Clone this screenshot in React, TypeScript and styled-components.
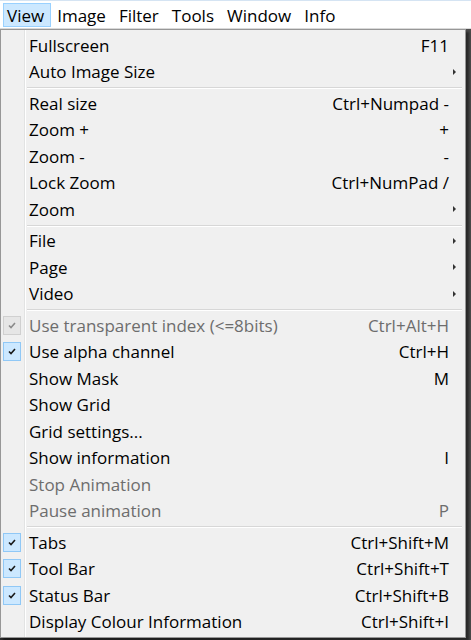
import React from 'react';
import styled, { createGlobalStyle } from 'styled-components';

type Item =
	| { kind: 'sep' }
	| {
			kind: 'item';
			label: string;
			shortcut?: string;
			submenu?: boolean;
			checked?: boolean;
			disabled?: boolean;
	  };

const items: Item[] = [
	{ kind: 'item', label: 'Fullscreen', shortcut: 'F11' },
	{ kind: 'item', label: 'Auto Image Size', submenu: true },
	{ kind: 'sep' },
	{ kind: 'item', label: 'Real size', shortcut: 'Ctrl+Numpad -' },
	{ kind: 'item', label: 'Zoom +', shortcut: '+' },
	{ kind: 'item', label: 'Zoom -', shortcut: '-' },
	{ kind: 'item', label: 'Lock Zoom', shortcut: 'Ctrl+NumPad /' },
	{ kind: 'item', label: 'Zoom', submenu: true },
	{ kind: 'sep' },
	{ kind: 'item', label: 'File', submenu: true },
	{ kind: 'item', label: 'Page', submenu: true },
	{ kind: 'item', label: 'Video', submenu: true },
	{ kind: 'sep' },
	{ kind: 'item', label: 'Use transparent index (<=8bits)', shortcut: 'Ctrl+Alt+H', checked: true, disabled: true },
	{ kind: 'item', label: 'Use alpha channel', shortcut: 'Ctrl+H', checked: true },
	{ kind: 'item', label: 'Show Mask', shortcut: 'M' },
	{ kind: 'item', label: 'Show Grid' },
	{ kind: 'item', label: 'Grid settings...' },
	{ kind: 'item', label: 'Show information', shortcut: 'I' },
	{ kind: 'item', label: 'Stop Animation', disabled: true },
	{ kind: 'item', label: 'Pause animation', shortcut: 'P', disabled: true },
	{ kind: 'sep' },
	{ kind: 'item', label: 'Tabs', shortcut: 'Ctrl+Shift+M', checked: true },
	{ kind: 'item', label: 'Tool Bar', shortcut: 'Ctrl+Shift+T', checked: true },
	{ kind: 'item', label: 'Status Bar', shortcut: 'Ctrl+Shift+B', checked: true },
	{ kind: 'item', label: 'Display Colour Information', shortcut: 'Ctrl+Shift+I' },
];

const menus = ['View', 'Image', 'Filter', 'Tools', 'Window', 'Info'];

const GlobalStyle = createGlobalStyle`
	body {
		margin: 0;
		background: #3b3b3b;
		font-family: "Open Sans", "Noto Sans", sans-serif;
	}
`;

const Frame = styled.div`
	width: 471px;
	height: 640px;
	overflow: hidden;
	background: linear-gradient(90deg, #2e2e2e, #4a4a4a);
`;

const MenuBar = styled.div`
	display: flex;
	align-items: stretch;
	gap: 2px;
	height: 29px;
	box-sizing: border-box;
	padding: 2px 0 1px 3px;
	background: #ffffff;
	border-top: 1px solid #d5e4f3;
	border-bottom: 1px solid #d9d9d9;
`;

const MenuTitle = styled.div<{ $active?: boolean }>`
	display: flex;
	align-items: center;
	padding: 0 6px 0 3px;
	box-sizing: border-box;
	font-size: 17px;
	color: #000;
	background: ${(p) => (p.$active ? '#cce8ff' : 'transparent')};
	border: 1px solid ${(p) => (p.$active ? '#99d1ff' : 'transparent')};
`;

const Dropdown = styled.div`
	width: 466px;
	box-sizing: border-box;
	padding: 2px 1px 2px 1px;
	background-color: #f0f0f0;
	background-image: linear-gradient(90deg, transparent 23px, #e2e3e3 23px, #e2e3e3 24px, #ffffff 24px, #ffffff 25px, transparent 25px);
	border: 1px solid #979797;
	box-shadow: 3px 3px 2px rgba(0, 0, 0, 0.45);
`;

const Row = styled.div<{ $disabled?: boolean }>`
	display: grid;
	grid-template-columns: 25px 1fr auto 15px;
	align-items: center;
	height: 26.5px;
	font-size: 17px;
	color: ${(p) => (p.$disabled ? '#6d6d6d' : '#000000')};
`;

const CheckCell = styled.div`
	display: flex;
	align-items: center;
	padding-left: 1px;
`;

const CheckBox = styled.div<{ $disabled?: boolean }>`
	width: 18px;
	height: 19px;
	box-sizing: border-box;
	display: flex;
	align-items: center;
	justify-content: center;
	background: ${(p) => (p.$disabled ? '#e6e6e6' : '#cce8ff')};
	border: 1px solid ${(p) => (p.$disabled ? '#d0d0d0' : '#90c8f6')};
`;

const Label = styled.div`
	padding-left: 2px;
	white-space: nowrap;
`;

const Shortcut = styled.div`
	white-space: nowrap;
	text-align: right;
`;

const Arrow = styled.div`
	display: flex;
	justify-content: center;
	padding-right: 4px;
`;

const Separator = styled.div`
	height: 1px;
	margin: 2px 2px 1px 25px;
	background: #d7d7d7;
	border-bottom: 1px solid #ffffff;
`;

const Check = ({ disabled }: { disabled?: boolean }) => (
	<svg width="8" height="7" viewBox="0 0 8 7">
		<path d="M1 3.5 L3 5.5 L7 1" fill="none" stroke={disabled ? '#8a8a8a' : '#1a1a1a'} strokeWidth="1.6" />
	</svg>
);

const SubArrow = () => (
	<svg width="3" height="6" viewBox="0 0 3 6">
		<path d="M0 0 L3 3 L0 6 Z" fill="#333" />
	</svg>
);

export default function App() {
	return (
		<Frame>
			<GlobalStyle />
			<MenuBar>
				{menus.map((m, i) => (
					<MenuTitle key={m} $active={i === 0}>
						{m}
					</MenuTitle>
				))}
			</MenuBar>
			<Dropdown>
				{items.map((it, i) =>
					it.kind === 'sep' ? (
						<Separator key={i} />
					) : (
						<Row key={i} $disabled={it.disabled}>
							<CheckCell>
								{it.checked && (
									<CheckBox $disabled={it.disabled}>
										<Check disabled={it.disabled} />
									</CheckBox>
								)}
							</CheckCell>
							<Label>{it.label}</Label>
							<Shortcut>{it.shortcut}</Shortcut>
							<Arrow>{it.submenu && <SubArrow />}</Arrow>
						</Row>
					)
				)}
			</Dropdown>
		</Frame>
	);
}
